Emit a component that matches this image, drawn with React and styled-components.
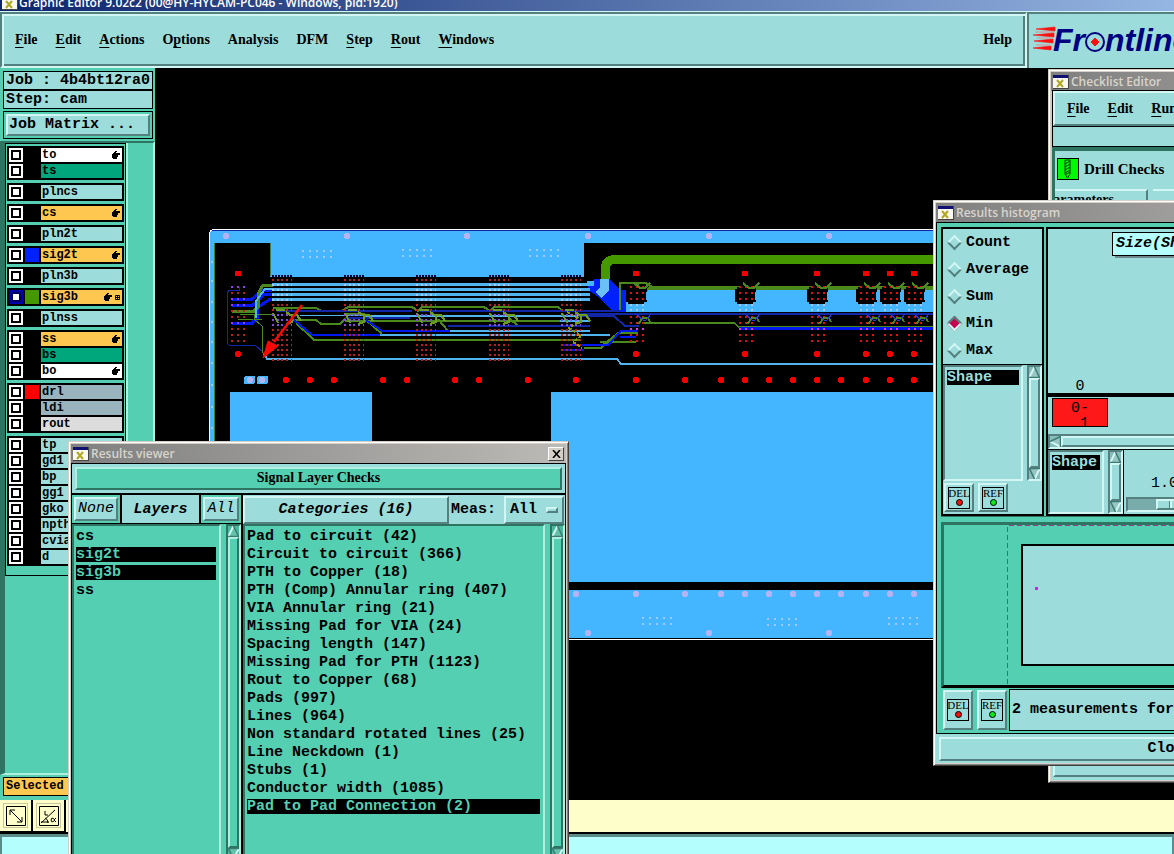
import styled, { createGlobalStyle, css } from "styled-components"
import { useState } from "react"

const c = {
  cyan: "#9cdcda",
  cyanLight: "#d2f6f4",
  cyanDark: "#54807f",
  teal: "#55cfb1",
  tealLight: "#aeefdf",
  tealDark: "#2f7362",
  green: "#00a67c",
  orange: "#fec74f",
  gray: "#d4d0c8",
  copper: "#44b6ff",
  navy: "#1126a8",
  blue: "#0018f0",
  red: "#f40000",
  trace: "#4a8a1c",
  pale: "#b4b4f4",
}

const mono = `"Liberation Mono", monospace`
const serif = `"Liberation Serif", serif`

const raised = css`
  border: 2px solid;
  border-color: ${c.cyanLight} ${c.cyanDark} ${c.cyanDark} ${c.cyanLight};
`
const sunken = css`
  border: 2px solid;
  border-color: ${c.cyanDark} ${c.cyanLight} ${c.cyanLight} ${c.cyanDark};
`
const raisedTeal = css`
  border: 2px solid;
  border-color: ${c.tealLight} ${c.tealDark} ${c.tealDark} ${c.tealLight};
`
const sunkenTeal = css`
  border: 2px solid;
  border-color: ${c.tealDark} ${c.tealLight} ${c.tealLight} ${c.tealDark};
`

const layerGroups = [
  [
    { name: "to", bg: "#ffffff", hand: true },
    { name: "ts", bg: c.green },
  ],
  [{ name: "plncs", bg: c.cyan }],
  [{ name: "cs", bg: c.orange, hand: true }],
  [{ name: "pln2t", bg: c.cyan }],
  [{ name: "sig2t", bg: c.orange, hand: true, color: "#0022ff" }],
  [{ name: "pln3b", bg: c.cyan }],
  [{ name: "sig3b", bg: c.orange, hand: true, grid: true, color: "#459800", active: true }],
  [{ name: "plnss", bg: c.cyan }],
  [
    { name: "ss", bg: c.orange, hand: true },
    { name: "bs", bg: c.green },
    { name: "bo", bg: "#ffffff", hand: true },
  ],
  [
    { name: "drl", bg: "#9ab4be", color: "#ff0000" },
    { name: "ldi", bg: "#9ab4be" },
    { name: "rout", bg: "#dcdcdc" },
  ],
  ["tp", "gd1", "bp", "gg1", "gko", "npth", "cvia", "d"].map((name) => ({ name, bg: c.cyan })),
]

const categories = [
  "Pad to circuit (42)",
  "Circuit to circuit (366)",
  "PTH to Copper (18)",
  "PTH (Comp) Annular ring (407)",
  "VIA Annular ring (21)",
  "Missing Pad for VIA (24)",
  "Spacing length (147)",
  "Missing Pad for PTH (1123)",
  "Rout to Copper (68)",
  "Pads (997)",
  "Lines (964)",
  "Non standard rotated lines (25)",
  "Line Neckdown (1)",
  "Stubs (1)",
  "Conductor width (1085)",
  "Pad to Pad Connection (2)",
]

// [before, underlined letter, after]
const menus = [
  ["", "F", "ile"],
  ["", "E", "dit"],
  ["", "A", "ctions"],
  ["O", "p", "tions"],
  ["Analysis", "", ""],
  ["DFM", "", ""],
  ["", "S", "tep"],
  ["", "R", "out"],
  ["", "W", "indows"],
]

const range = (n, start, step) => Array.from({ length: n }, (_, i) => start + i * step)

function WindowIcon() {
  return (
    <svg width="16" height="14" viewBox="0 0 16 14">
      <rect width="16" height="14" fill="#444" />
      <rect width="15" height="13" fill="#f8f8f0" />
      <rect width="15" height="3" fill="#101070" />
      <path d="M4 5l6 7M10 5l-6 7" stroke="#b0a820" strokeWidth="2" />
    </svg>
  )
}

function Hand() {
  return (
    <svg width="8" height="8" viewBox="0 0 8 8" shapeRendering="crispEdges">
      <path d="M3 0h2v1H4v1h4v2H6v2H5v2H1V7H0V3h1V2h1V1h1z" />
    </svg>
  )
}

function Arrow({ dir = "up" }) {
  const turn = { up: 0, down: 180, left: -90 }[dir]
  return (
    <svg width="11" height="11" viewBox="0 0 11 11">
      <g transform={`rotate(${turn} 5.5 5.5)`}>
        <path d="M5.5 0L11 11H0z" fill="rgba(255,255,255,.15)" />
        <path d="M5.5 0L0 11" stroke={c.cyanLight} strokeWidth="2" fill="none" />
        <path d="M5.5 0L10.5 10.5H0" stroke="#3c7c72" strokeWidth="1.5" fill="none" />
      </g>
    </svg>
  )
}

function Scroll({ teal }) {
  return (
    <ScrollBar $teal={teal}>
      <Arrow />
      <Thumb $teal={teal} />
      <Arrow dir="down" />
    </ScrollBar>
  )
}

function FlagIcon({ text, color }) {
  return (
    <svg width="24" height="22" viewBox="0 0 24 22">
      <rect x="1.5" y=".5" width="21" height="21" fill="none" stroke="#000" />
      <text x="12" y="10" fontSize="11" fontWeight="normal" fontFamily="Liberation Serif" textAnchor="middle">
        {text}
      </text>
      <circle cx="12.5" cy="15.5" r="3" fill={color} stroke="#000" />
    </svg>
  )
}

function Logo() {
  return (
    <LogoBox>
      <svg width="240" height="40" viewBox="0 0 240 40">
        <path
          d="M3 9L22 7V11zM0 15L21 13V17zM4 15M1 21L20 19V23zM0 28L18 26V30z"
          fill="#ff1010"
          stroke="#ff1010"
          strokeWidth=".6"
        />
        <path d="M2 12h18M4 18h14M3 25h14" stroke="#ff6060" strokeWidth=".6" />
        <g fill="#000080" fontFamily="Liberation Sans" fontWeight="bold" fontStyle="italic" fontSize="32">
          <text x="20" y="31">Fr</text>
          <text x="72" y="31">ntline</text>
        </g>
        <circle cx="62" cy="22" r="9" fill={c.cyan} stroke="#000080" strokeWidth="2" />
        <path d="M62 18l4 4-4 4-4-4z" fill="#ff1010" stroke="#ff1010" />
      </svg>
    </LogoBox>
  )
}

const padColumns = [273, 345, 417, 490, 562]
const chips = [636, 745, 817, 866, 890, 914]

function Board() {
  return (
    <BoardSvg shapeRendering="crispEdges">
      <g transform="translate(-155 -68)">
        <path d="M209.500 640V235q0-6 6-6H1300V639.500z" fill={c.copper} stroke="#fff" />
        <path d="M212 230H1300" stroke={c.navy} />
        <path d="M214 243H270V277H584V243H1300V392H551V582H1300V590H372V392H230V590H214z" fill="#000" />
        <path d="M210 638.500H1300" stroke="#000" />
        <path d="M214.500 243V590M270.500 243V276" stroke="#3c8040" />

        {[226, 347, 467, 588, 709, 829].map((x) => (
          <circle key={x} cx={x} cy="236" r="3" fill={c.pale} />
        ))}
        {[576, 636, 685, 721, 745, 769, 793, 817, 841, 866, 890, 914].map((x) => (
          <circle key={x} cx={x} cy="594" r="3" fill={c.pale} />
        ))}
        {[588, 709, 829].map((x) => (
          <circle key={x} cx={x} cy="633" r="3" fill={c.pale} />
        ))}
        {[[303, 251], [403, 250], [530, 250], [643, 618], [768, 619], [889, 618]].map(([x0, y0]) =>
          range(5, x0, 7).map((x) => (
            <path key={`${x}-${y0}`} d={`M${x - 1} ${y0}h2M${x - 1} ${y0 + 6}h2`} stroke="#a0c8fc" strokeWidth="2" />
          ))
        )}
        {[262, 281, 302, 322, 342, 363, 385, 407, 428].map((y) => (
          <rect key={y} x="211" y={y - 1} width="2" height="2" fill="#90d0f8" />
        ))}

        {/* heavy power trace and the copper area on the right */}
        <path d="M602 293L605 288V270Q605 259.500 615 259.500H1300" fill="none" stroke="#459800" strokeWidth="9" />
        <rect x="626" y="290" width="600" height="22" fill={c.copper} />
        <path d="M595 279h14l11 11h6v22h-12l-17-16-9-6v-5z" fill="#0022f8" />
        <path d="M600 279h9v12l-8 7-5-6 4-5z" fill="#6cc0f8" />
        <path d="M587 281h7v5h-7z" fill={c.copper} />

        {/* left connector fan-out */}
        <g fill="none">
          <path d="M239 287v3h-10l-2 3V343l2 2h26l9 8" stroke={c.navy} />
          <path d="M232 299h20l10-9h10M232 305h21l12-11h8M232 323h20l5-5v-10l13-9h4" stroke={c.blue} strokeWidth="3" />
          <path d="M232 311h22l4-4v-13l5-9h10" stroke={c.trace} strokeWidth="3" />
          <path d="M240 314h14v5h8M238 319h15M254 319l8 7v26l5 6M253 314h20" stroke={c.trace} />
          <path d="M256 318V301l9-12h7" stroke="#50b8f0" strokeWidth="2" />
        </g>

        {/* signal bundle across the left half */}
        <g fill="none" stroke="#50b4ee">
          <path d="M272 284.500H590M272 289.500H590M272 294.500H590M272 299.500H590" strokeWidth="3" />
          <path d="M300 315.500H584" />
          <path d="M365 316H586M365 320.500H590" strokeWidth="2" />
          <path d="M448 330.500H590M380 335H610" strokeWidth="2" />
          <path d="M264 354l3 5H617l4 5H1300" strokeWidth="2" />
        </g>
        <g fill="none" stroke={c.trace} strokeWidth="2">
          <path d="M273 308H316l6 3H342l6-4H412l6 4 4-4H484l6 4 4-4H558l5 4" />
          <path d="M290 320H316l5 4H340l5-5M296 323l18 17H580M366 320l16 14M438 319l10 12M510 319l8 7" />
          <path d="M345 314H365M345 321H560" />
          <path d="M572 345H603l15-12h20M584 348h17l20-16h14M600 342h36" />
          <path d="M620 310V283H646l5 4H1300M637 284l6 6h4l4-5M642 322.500H734l4 4h500" />
        </g>
        <g fill="none" stroke={c.navy} strokeWidth="2">
          <path d="M277 311H412M420 311H620M345 318H410M448 326H590" />
          <path d="M578 313.500H1300M578 316H614l11 10h14" />
        </g>
        <g fill="none" stroke={c.blue} strokeWidth="2">
          <path d="M294 320l18 15H380M366 320l16 11H450M562 345H608l13-14h16M620 337h16M562 350h22" />
          <path d="M739 328.500H1300" strokeWidth="3" />
        </g>
        <path d="M646 289H1300" stroke={c.trace} strokeWidth="2" fill="none" />

        {padColumns.map((x0) => (
          <g key={x0}>
            <path d={`M${x0 - 1} 275.500h20`} stroke="#000040" strokeWidth="2" strokeDasharray="2 1" />
            {range(17, 280, 5).map((y) => (
              <path
                key={y}
                d={`M${x0 - 1} ${y}h20`}
                stroke={y > 280 && y < 304 ? "#a8c8f8" : y > 310 && y < 326 ? "#8848e0" : "#b82018"}
                strokeWidth="2"
                strokeDasharray="2 2.700"
              />
            ))}
            <path
              d={`M${x0 + 13} 312l6 4v6l-6 2M${x0 + 19} 315h5l4 6M${x0} 313l5 10M${x0 + 3} 310h9`}
              stroke="#6c9c20"
              strokeWidth="2"
              fill="none"
            />
          </g>
        ))}
        {range(10, 287, 6).map((y, i) => (
          <path
            key={y}
            d={`M231 ${y}h14`}
            stroke={[0, 2, 3, 6].includes(i) ? "#9040f0" : "#b82018"}
            strokeWidth="2"
            strokeDasharray="2 4"
          />
        ))}
        <path d="M567 312l14 8-12 8 12 8-8 6 9 6" stroke="#8a9a10" strokeWidth="2" strokeDasharray="3 2" fill="none" />

        {chips.map((x) => (
          <g key={x}>
            <path d={`M${x - 8} 287h3v-2h13v3h3v4h-1v8h1v2h-3v2h-16v-2h-2v-13h2z`} fill="#000" />
            {[287, 293, 299, 305, 310, 317, 323, 329, 335, 341].map((y, i) => (
              <path
                key={y}
                d={`M${x - 6} ${y}h2m4 0h2m4 0h2`}
                stroke={i === 3 || i === 4 ? "#a8c8f8" : i === 7 ? "#d040f0" : "#e01010"}
                strokeWidth="2"
              />
            ))}
            <path d={`M${x - 2} 283l6 5h5l5-5M${x + 2} 324l5-6h5l2 4`} stroke={c.trace} strokeWidth="2" fill="none" />
            <path d={`M${x} 314l7 6h3l5-6`} stroke="#2838e8" fill="none" />
            <rect x={x - 3} y="271" width="6" height="5" fill={c.red} />
            <circle cx={x} cy="354" r="3" fill={c.red} />
          </g>
        ))}
        <rect x="235" y="271" width="6" height="5" fill={c.red} />
        <circle cx="238" cy="354" r="3" fill={c.red} />
        {[286, 310, 334, 383, 407, 455, 479, 528, 576, 636, 685, 721, 745, 769, 793, 817, 841, 866, 890, 914].map((x) => (
          <circle key={x} cx={x} cy="380" r="3" fill={c.red} />
        ))}
        <rect x="244" y="376" width="11" height="8" rx="2" fill={c.copper} />
        <rect x="257" y="376" width="11" height="8" rx="2" fill={c.copper} />
        <circle cx="250" cy="380" r="3" fill={c.pale} />
        <circle cx="262" cy="380" r="3" fill={c.pale} />

        <g shapeRendering="auto">
          <path d="M302 305L274 342" stroke="#f80808" strokeWidth="2.500" />
          <path d="M263 358L268 341L278 346z" fill="#f80808" stroke="#f80808" />
        </g>
      </g>
    </BoardSvg>
  )
}

function MenuItems({ items }) {
  return items.map(([pre, key, post]) => (
    <MenuButton key={pre + key + post}>
      {pre}
      {key && <u>{key}</u>}
      {post}
    </MenuButton>
  ))
}

function LayerList() {
  return (
    <LayerPanel>
      {layerGroups.map((group) => (
        <LayerGroup key={group[0].name}>
          {group.map((l) => (
            <LayerRow key={l.name}>
              <LayerCheck type="checkbox" id={`layer-${l.name}`} $active={l.active} />
              <Swatch $color={l.color} />
              <LayerName htmlFor={`layer-${l.name}`} $bg={l.bg}>
                <span>{l.name}</span>
                {l.hand && <Hand />}
                {l.grid && (
                  <svg width="5" height="5" viewBox="0 0 5 5">
                    <path d="M.5 .5h4v4h-4zM2.500 0v5M0 2.500h5" fill="none" stroke="#000" />
                  </svg>
                )}
              </LayerName>
            </LayerRow>
          ))}
        </LayerGroup>
      ))}
    </LayerPanel>
  )
}

function ResultsViewer() {
  return (
    <ViewerWindow>
      <TitleBar>
        <WindowIcon />
        <span>Results viewer</span>
        <CloseButton aria-label="Close window">
          <svg width="9" height="8" viewBox="0 0 9 8">
            <path d="M1 0l7 8M8 0L1 8" stroke="#000" strokeWidth="1.600" />
          </svg>
        </CloseButton>
      </TitleBar>
      <CheckHeader>
        <CheckTitle>Signal Layer Checks</CheckTitle>
      </CheckHeader>
      <ViewerBody>
        <LayersPane>
          <PaneHeader $line>
            <PaneButton $w={44}>None</PaneButton>
            <PaneTitle>Layers</PaneTitle>
            <PaneButton $w={36}>All</PaneButton>
          </PaneHeader>
          <ListArea>
            <List>
              {["cs", "sig2t", "sig3b", "ss"].map((n) => (
                <Item key={n} $selected={n.startsWith("sig")}>{n}</Item>
              ))}
            </List>
            <Scroll teal />
          </ListArea>
        </LayersPane>
        <CategoriesPane>
          <PaneHeader>
            <CategoriesButton>Categories (16)</CategoriesButton>
            <MeasLabel htmlFor="meas">Meas:</MeasLabel>
            <SelectBox>
              <select id="meas" defaultValue="All">
                <option>All</option>
              </select>
              <i />
            </SelectBox>
          </PaneHeader>
          <ListArea>
            <List>
              {categories.map((n, i) => (
                <Item key={n} $selected={i === categories.length - 1}>{n}</Item>
              ))}
            </List>
            <Scroll teal />
          </ListArea>
        </CategoriesPane>
      </ViewerBody>
    </ViewerWindow>
  )
}

function ChecklistEditor() {
  return (
    <ChecklistWindow>
      <TitleBar>
        <WindowIcon />
        <span>Checklist Editor</span>
      </TitleBar>
      <ChecklistMenu>
        <MenuItems items={[["", "F", "ile"], ["", "E", "dit"], ["", "R", "un"]]} />
      </ChecklistMenu>
      <BlankRow />
      <DrillPanel>
        <DrillTitle>
          <svg width="22" height="22" viewBox="0 0 22 22">
            <rect x=".5" y=".5" width="21" height="21" fill="#00f800" stroke="#000" />
            <path
              d="M8 2h5v14l-2.500 4L8 16zM8 6l5-3M8 9l5-3M8 12l5-3M8 15l5-3M8 17l5-3"
              fill="none"
              stroke="#003000"
            />
          </svg>
          Drill Checks
        </DrillTitle>
        <Tabs>
          <Tab>Parameters</Tab>
          <Tab />
        </Tabs>
      </DrillPanel>
      <ChecklistFoot />
    </ChecklistWindow>
  )
}

function Histogram() {
  const [mode, setMode] = useState("Min")
  return (
    <HistogramWindow>
      <TitleBar>
        <WindowIcon />
        <span>Results histogram</span>
      </TitleBar>
      <HistBody>
        <HistTop>
          <ModePane>
            <RadioGroup>
              {["Count", "Average", "Sum", "Min", "Max"].map((m) => (
                <RadioLabel key={m}>
                  <input type="radio" name="mode" checked={mode === m} onChange={() => setMode(m)} />
                  {m}
                </RadioLabel>
              ))}
            </RadioGroup>
            <ShapeArea>
              <ShapeList>
                <ShapeItem>Shape</ShapeItem>
              </ShapeList>
              <Scroll />
            </ShapeArea>
            <FlagRow>
              <FlagButton aria-label="Delete"><FlagIcon text="DEL" color="#f01010" /></FlagButton>
              <FlagButton aria-label="Reference"><FlagIcon text="REF" color="#10e820" /></FlagButton>
            </FlagRow>
          </ModePane>
          <ChartPane>
            <Chart>
              <Legend>Size(Shape)</Legend>
              <Count>0</Count>
            </Chart>
            <BinRow>
              <Bin><span>0-</span><span>1</span></Bin>
            </BinRow>
            <HScroll>
              <Arrow dir="left" />
              <i />
            </HScroll>
            <ScaleRow>
              <ShapeList>
                <ShapeItem>Shape</ShapeItem>
              </ShapeList>
              <Scroll />
              <Scale>
                <label htmlFor="scale">1.0</label>
                <input id="scale" type="range" defaultValue="12" />
              </Scale>
            </ScaleRow>
          </ChartPane>
        </HistTop>
        <Preview>
          <svg width="100%" height="100%" shapeRendering="crispEdges">
            <path d="M63.500 159V.5H600" fill="none" stroke="#a03c80" strokeDasharray="5 3" />
            <rect x="78" y="20" width="500" height="120" fill={c.cyan} stroke="#000" strokeWidth="2" />
            <rect x="91" y="62" width="3" height="3" fill="#d020f0" />
          </svg>
        </Preview>
        <MeasureRow>
          <FlagButton $tall aria-label="Delete measurement"><FlagIcon text="DEL" color="#f01010" /></FlagButton>
          <FlagButton $tall aria-label="Reference measurement"><FlagIcon text="REF" color="#10e820" /></FlagButton>
          <Measurements>2 measurements for Shape</Measurements>
        </MeasureRow>
      </HistBody>
      <CloseWide>Close</CloseWide>
    </HistogramWindow>
  )
}

export default function App() {
  return (
    <Screen>
      <GlobalStyle />
      <MainTitle>
        <WindowIcon />
        <span>Graphic Editor 9.02c2 (00@HY-HYCAM-PC046 - Windows, pid:1920)</span>
      </MainTitle>
      <Header>
        <MenuBar>
          <MenuItems items={menus} />
          <Push />
          <MenuButton>Help</MenuButton>
        </MenuBar>
        <Logo />
      </Header>
      <Work>
        <Side>
          <JobBox>
            <JobLine>Job : 4b4bt12ra0</JobLine>
            <JobLine>Step: cam</JobLine>
            <MatrixFrame>
              <MatrixButton>Job Matrix ...</MatrixButton>
            </MatrixFrame>
          </JobBox>
          <LayerArea>
            <LayerList />
          </LayerArea>
          <SelectedFrame>
            <Selected>Selected</Selected>
          </SelectedFrame>
        </Side>
        <Board />
      </Work>
      <StatusBar>
        <ToolButton aria-label="Measure distance">
          <svg width="20" height="20" viewBox="0 0 20 20">
            <path d="M.5 .5h19v19h-19zM4 4l12 12M4 9V4h5M16 11v5h-5" fill="none" stroke="#000" />
          </svg>
        </ToolButton>
        <ToolButton aria-label="Measure angle">
          <svg width="20" height="20" viewBox="0 0 20 20">
            <path d="M.5 .5h19v19h-19zM2 17L16 4M2 16h8M6 5v4h3M6 12q3 1 3 5M15 13l-2-1-1 2 1 2 2-1M17 12l-2 2 2 2" fill="none" stroke="#000" />
          </svg>
        </ToolButton>
      </StatusBar>
      <CommandLine aria-label="Command" />
      <ChecklistEditor />
      <ResultsViewer />
      <Histogram />
    </Screen>
  )
}

const GlobalStyle = createGlobalStyle`
  * { box-sizing: border-box; }
  body { margin: 0; background: #000; }
  button, input, select { font: inherit; color: inherit; margin: 0; padding: 0; border-radius: 0; }
  svg { display: block; flex: none; }
`

const Screen = styled.div`
  position: relative;
  display: flex;
  flex-direction: column;
  min-height: 100vh;
  overflow: hidden;
  background: #000;
  color: #000;
  font: bold 15px/18px ${mono};
`

const MainTitle = styled.div`
  display: flex;
  align-items: flex-end;
  gap: 1px;
  height: 12px;
  padding: 0 2px 1px;
  overflow: hidden;
  background: linear-gradient(90deg, #0c246c, #95b5e2);
  border-bottom: 1px solid ${c.cyanLight};
  color: #fff;
  font: 600 12px/14px "Open Sans", sans-serif;
`

const Header = styled.header`
  display: flex;
  height: 56px;
`

const MenuBar = styled.nav`
  display: flex;
  align-items: center;
  flex: 1;
  gap: 18px;
  padding: 0 13px;
  background: ${c.cyan};
  border: 2px solid;
  border-color: ${c.cyanDark} ${c.cyanLight} ${c.cyanLight} ${c.cyanDark};
  box-shadow: inset 2px 2px ${c.cyanLight}, inset -2px -2px ${c.cyanDark};
`

const Push = styled.span`
  flex: 1;
`

const MenuButton = styled.button`
  background: none;
  border: none;
  font: bold 14px/18px ${serif};
  u {
    text-underline-offset: 3px;
  }
`

const LogoBox = styled.div`
  width: 147px;
  padding: 6px 0 0 4px;
  overflow: hidden;
  background: ${c.cyan};
  border: solid ${c.cyanDark};
  border-width: 2px 0 0 2px;
`

const Work = styled.main`
  display: flex;
  flex: 1;
`

const Side = styled.aside`
  display: flex;
  flex-direction: column;
  width: 155px;
  background: ${c.teal};
`

const BoardSvg = styled.svg`
  flex: 1;
  min-width: 0;
  height: auto;
`

const JobBox = styled.div`
  padding: 3px 2px 2px 3px;
`

const JobLine = styled.div`
  padding: 0 2px;
  background: ${c.cyan};
  border: 1px solid #000;
  line-height: 17px;
  white-space: nowrap;
`

const MatrixFrame = styled.div`
  margin-top: 2px;
  padding: 2px;
  border: 1px solid #000;
`

const MatrixButton = styled.button`
  ${raised}
  width: 100%;
  height: 22px;
  padding: 0 1px;
  background: ${c.cyan};
  line-height: 18px;
  text-align: left;
`

const LayerArea = styled.div`
  flex: 1;
  border: solid;
  border-width: 2px 2px 2px 5px;
  border-color: ${c.tealDark} ${c.tealLight} ${c.tealLight} ${c.tealDark};
`

const LayerPanel = styled.div`
  display: flex;
  flex-direction: column;
  gap: 3px;
  width: 121px;
  padding: 2px 1px 9px;
  border: 1px solid #000;
  box-shadow: 2px 0 ${c.tealLight};
`

const LayerGroup = styled.div`
  padding: 1px 2px;
  background: #000;
`

const LayerRow = styled.div`
  display: flex;
  align-items: center;
  gap: 2px;
  height: 16px;
`

const LayerCheck = styled.input`
  appearance: none;
  width: 14px;
  height: 14px;
  background: #fff;
  border: 2px solid ${(p) => (p.$active ? "#0000b0" : "#fff")};
  box-shadow: inset 0 0 0 2px ${(p) => (p.$active ? "#000060" : "#000")};
`

const Swatch = styled.span`
  width: 14px;
  height: 14px;
  background: ${(p) => p.$color || "#000"};
`

const LayerName = styled.label`
  display: flex;
  align-items: center;
  flex: 1;
  gap: 3px;
  height: 14px;
  padding: 0 2px 0 1px;
  background: ${(p) => p.$bg};
  font-size: 12px;
  line-height: 14px;
  span {
    flex: 1;
  }
`

const SelectedFrame = styled.div`
  padding: 2px 0 4px 3px;
`

const Selected = styled.div`
  padding: 0 2px;
  background: ${c.orange};
  border: 1px solid #000;
  font-size: 12px;
  line-height: 17px;
`

const StatusBar = styled.div`
  display: flex;
  height: 34px;
  background: #fefecb;
  border-bottom: 2px solid #000;
`

const ToolButton = styled.button`
  display: flex;
  align-items: center;
  justify-content: center;
  width: 33px;
  height: 32px;
  background: #fefecb;
  border: solid #000;
  border-width: 0 2px 1px 0;
  box-shadow: inset 0 0 0 3px #fefecb, inset 0 0 0 4px #c8c89a;
`

const CommandLine = styled.input`
  height: 20px;
  background: #b4fffe;
  border: solid;
  border-width: 3px 2px 0;
  border-color: #5c8c8a;
  outline: none;
`

const Frame = styled.section`
  position: absolute;
  display: flex;
  flex-direction: column;
  background: ${c.cyan};
  border: 1px solid;
  border-color: ${c.gray} #404040 #404040 ${c.gray};
  box-shadow: inset 1px 1px #fff, inset -1px -1px #808080, inset 0 0 0 2px ${c.gray};
  padding: 2px;
`

const ViewerWindow = styled(Frame)`
  left: 68px;
  top: 441px;
  bottom: -10px;
  width: 501px;
`

const ChecklistWindow = styled(Frame)`
  left: 1048px;
  top: 69px;
  width: 500px;
  height: 714px;
`

const HistogramWindow = styled(Frame)`
  left: 933px;
  top: 200px;
  width: 474px;
  height: 566px;
`

const TitleBar = styled.div`
  display: flex;
  align-items: center;
  gap: 2px;
  height: 19px;
  padding: 0 2px;
  background: linear-gradient(90deg, #808080, #bcbab6);
  color: #d8d4cc;
  font: 600 12px/18px "Open Sans", sans-serif;
  span {
    flex: 1;
  }
`

const CloseButton = styled.button`
  display: flex;
  align-items: center;
  justify-content: center;
  width: 16px;
  height: 14px;
  background: ${c.gray};
  border: 1px solid;
  border-color: #fff #404040 #404040 #fff;
`

const CheckHeader = styled.div`
  padding: 3px;
  border: solid #000;
  border-width: 1px 1px 2px;
`

const CheckTitle = styled.div`
  ${raisedTeal}
  height: 23px;
  background: ${c.teal};
  font: bold 14px/18px ${serif};
  text-align: center;
`

const ViewerBody = styled.div`
  display: grid;
  grid-template-columns: 171px 1fr;
  flex: 1;
  border: solid #000;
  border-width: 0 1px;
`

const LayersPane = styled.div`
  display: flex;
  flex-direction: column;
  background: ${c.teal};
  border-right: 2px solid #000;
`

const CategoriesPane = styled(LayersPane)`
  border-right: none;
`

const PaneHeader = styled.div`
  display: flex;
  align-items: stretch;
  height: 29px;
  background: ${c.cyan};
  border-bottom: ${(p) => (p.$line ? "1px solid #000" : "none")};
`

const PaneButton = styled.button`
  ${raised}
  width: ${(p) => p.$w}px;
  margin: 2px;
  background: ${c.cyan};
  box-shadow: 0 0 0 2px ${c.teal};
  font-weight: normal;
  font-style: italic;
`

const PaneTitle = styled.div`
  flex: 1;
  border: solid #000;
  border-width: 0 2px;
  font-style: italic;
  line-height: 29px;
  text-align: center;
`

const CategoriesButton = styled.button`
  ${raised}
  width: 206px;
  margin-top: 1px;
  background: ${c.cyan};
  font-style: italic;
`

const MeasLabel = styled.label`
  flex: 1;
  padding-left: 2px;
  line-height: 30px;
`

const SelectBox = styled.div`
  ${raised}
  display: flex;
  align-items: center;
  width: 60px;
  margin: 1px 1px 0 0;
  padding: 0 4px;
  select {
    flex: 1;
    min-width: 0;
    appearance: none;
    background: none;
    border: none;
  }
  i {
    ${raised}
    width: 12px;
    height: 6px;
  }
`

const ListArea = styled.div`
  display: flex;
  flex: 1;
  gap: 5px;
`

const List = styled.ul`
  ${sunkenTeal}
  flex: 1;
  margin: 0;
  padding: 3px 3px 2px 2px;
  list-style: none;
  white-space: nowrap;
`

const Item = styled.li`
  height: 15px;
  margin-bottom: 3px;
  line-height: 16px;
  background: ${(p) => (p.$selected ? "#000" : "none")};
  color: ${(p) => (p.$selected ? c.teal : "#000")};
  font-weight: bold;
`

const ScrollBar = styled.div`
  display: flex;
  flex-direction: column;
  align-items: center;
  width: 15px;
  background: ${(p) => (p.$teal ? "#49b89d" : "#86bcba")};
  ${(p) => (p.$teal ? sunkenTeal : sunken)}
`

const Thumb = styled.div`
  flex: 1;
  width: 11px;
  background: ${(p) => (p.$teal ? c.teal : c.cyan)};
  ${(p) => (p.$teal ? raisedTeal : raised)}
`

const ChecklistMenu = styled.nav`
  ${raised}
  display: flex;
  align-items: center;
  gap: 18px;
  height: 35px;
  margin-left: 2px;
  padding: 0 12px;
  outline: 1px solid #000;
`

const BlankRow = styled.div`
  height: 21px;
  margin-left: 1px;
  border: 1px solid #000;
`

const DrillPanel = styled.div`
  flex: 1;
  overflow: hidden;
  margin-left: 1px;
  border: 3px solid ${c.tealDark};
  border-top-width: 4px;
`

const DrillTitle = styled.h2`
  display: flex;
  align-items: center;
  gap: 5px;
  margin: 7px 2px;
  font: bold 15px/22px ${serif};
`

const Tabs = styled.div`
  display: flex;
  gap: 5px;
`

const Tab = styled.div`
  ${raised}
  width: 93px;
  height: 24px;
  margin-top: 2px;
  overflow: hidden;
  border-left: none;
  font: bold 14px/18px ${serif};
  direction: rtl;
  padding-right: 32px;
`

const ChecklistFoot = styled.div`
  ${raised}
  height: 20px;
  margin: 4px 2px 3px;
`

const HistBody = styled.div`
  display: flex;
  flex-direction: column;
  flex: 1;
  padding: 4px;
  background: ${c.teal};
  border: 1px solid #000;
`

const HistTop = styled.div`
  display: grid;
  grid-template-columns: 103px 1fr;
  gap: 2px;
  height: 289px;
`

const ModePane = styled.div`
  display: flex;
  flex-direction: column;
  background: ${c.cyan};
  border: 2px solid #000;
`

const RadioGroup = styled.div`
  border-bottom: 1px solid #000;
`

const RadioLabel = styled.label`
  display: flex;
  align-items: center;
  gap: 6px;
  height: 27px;
  padding-left: 6px;
  input {
    ${raised}
    appearance: none;
    width: 11px;
    height: 11px;
    transform: rotate(45deg);
  }
  input:checked {
    ${sunken}
    background: #c80050;
  }
`

const ShapeArea = styled.div`
  display: flex;
  flex: 1;
  gap: 4px;
`

const ShapeList = styled.div`
  ${sunken}
  flex: 1;
  padding: 3px 2px;
`

const ShapeItem = styled.div`
  height: 15px;
  background: #000;
  color: ${c.cyan};
  line-height: 16px;
`

const FlagRow = styled.div`
  display: flex;
  gap: 4px;
  padding: 2px 1px;
`

const FlagButton = styled.button`
  ${raised}
  display: flex;
  align-items: center;
  justify-content: center;
  width: 30px;
  height: ${(p) => (p.$tall ? 40 : 29)}px;
  background: ${c.cyan};
`

const ChartPane = styled.div`
  display: flex;
  flex-direction: column;
  background: ${c.cyan};
  border: 2px solid #000;
  overflow: hidden;
`

const Chart = styled.div`
  display: flex;
  flex-direction: column;
  justify-content: space-between;
  height: 168px;
  padding-top: 3px;
  border-bottom: 4px solid #000;
`

const Legend = styled.div`
  align-self: flex-start;
  margin-left: 64px;
  padding: 2px 3px;
  background: #b4fffe;
  border: 1px solid #000;
  box-shadow: 3px 2px #708a90;
  font-style: italic;
`

const Count = styled.div`
  width: 64px;
  font-weight: normal;
  line-height: 13px;
  text-align: center;
`

const BinRow = styled.div`
  height: 37px;
  padding: 1px 4px;
`

const Bin = styled.div`
  display: flex;
  flex-direction: column;
  width: 56px;
  height: 29px;
  padding: 2px 18px;
  background: #ff1818;
  border: 1px solid #000;
  font-weight: normal;
  line-height: 15px;
  span:last-child {
    padding-left: 9px;
  }
`

const HScroll = styled.div`
  ${sunken}
  display: flex;
  align-items: center;
  height: 15px;
  background: #86bcba;
  i {
    ${raised}
    flex: 1;
    height: 11px;
    background: ${c.cyan};
  }
`

const ScaleRow = styled.div`
  display: flex;
  gap: 4px;
  flex: 1;
  border-top: 1px solid #000;
  ${ShapeList} {
    flex: none;
    width: 56px;
  }
`

const Scale = styled.div`
  display: flex;
  flex-direction: column;
  justify-content: flex-end;
  flex: 1;
  margin-left: -4px;
  padding: 2px;
  border-left: 1px solid #000;
  label {
    padding-left: 25px;
    font-weight: normal;
    line-height: 26px;
  }
  input {
    ${sunken}
    appearance: none;
    height: 15px;
    background: #78acaa;
  }
  input::-webkit-slider-thumb {
    ${raised}
    appearance: none;
    width: 30px;
    height: 11px;
    background: linear-gradient(90deg, ${c.cyan} 11px, ${c.cyanDark} 11px 12px, ${c.cyanLight} 12px 14px, ${c.cyan} 14px);
  }
`

const Preview = styled.div`
  flex: 1;
  margin-top: 6px;
  min-height: 0;
  border: 3px solid;
  border-color: ${c.tealDark} #000 #000 ${c.tealDark};
  box-shadow: 0 -5px ${c.teal}, 0 -6px ${c.tealDark};
`

const MeasureRow = styled.div`
  display: flex;
  align-items: center;
  gap: 4px;
  margin: 1px 0 -2px 2px;
`

const Measurements = styled.div`
  flex: 1;
  height: 42px;
  margin-left: -2px;
  padding-left: 2px;
  background: ${c.cyan};
  border: 1px solid #000;
  line-height: 40px;
`

const CloseWide = styled.button`
  ${raised}
  height: 24px;
  margin: 3px 3px 2px;
  background: ${c.cyan};
`
